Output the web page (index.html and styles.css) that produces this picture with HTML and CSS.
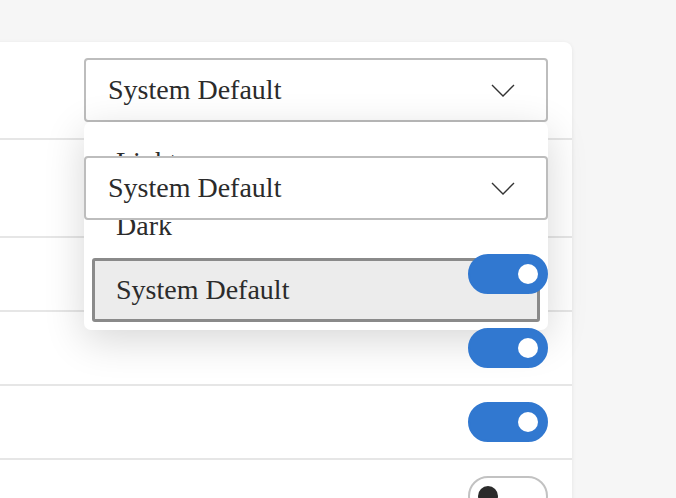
FILE: index.html
```html
<!DOCTYPE html>
<html lang="en">
<head>
<meta charset="utf-8">
<title>Settings</title>
<link rel="stylesheet" href="styles.css">
</head>
<body>
<main class="page">
  <section class="card">
    <div class="row">
      <div class="select-wrap">
        <button class="select" type="button">
          <span class="select-value">System Default</span>
          <svg class="chevron" width="24" height="13" viewBox="0 0 24 13" aria-hidden="true"><polyline points="1,1 12,12 23,1" fill="none" stroke="#333" stroke-width="1.4"/></svg>
        </button>
        <ul class="menu" role="listbox">
          <li class="option">Light</li>
          <li class="option">Dark</li>
          <li class="option selected">System Default</li>
        </ul>
      </div>
    </div>
    <div class="row">
      <button class="select raised" type="button">
        <span class="select-value">System Default</span>
        <svg class="chevron" width="24" height="13" viewBox="0 0 24 13" aria-hidden="true"><polyline points="1,1 12,12 23,1" fill="none" stroke="#333" stroke-width="1.4"/></svg>
      </button>
    </div>
    <div class="row">
      <span class="toggle on"><span class="knob"></span></span>
    </div>
    <div class="row">
      <span class="toggle on"><span class="knob"></span></span>
    </div>
    <div class="row">
      <span class="toggle on"><span class="knob"></span></span>
    </div>
    <div class="row">
      <span class="toggle"><span class="knob"></span></span>
    </div>
  </section>
</main>
</body>
</html>
```
FILE: styles.css
```css
html, body {
  margin: 0;
  height: 100%;
  overflow: hidden;
  background: #f6f6f6;
  font-family: "Liberation Serif", "Times New Roman", serif;
  color: #2b2b2b;
}

.page {
  padding-top: 42px;
}

.card {
  width: 700px;
  margin-left: -128px;
  background: #fff;
  border-radius: 8px;
  box-shadow: 0 1px 4px rgba(0, 0, 0, 0.08);
}

.row {
  display: flex;
  justify-content: flex-end;
  align-items: center;
  padding: 16px 24px;
  border-bottom: 2px solid #e6e6e6;
}

.select-wrap {
  position: relative;
}

.select {
  display: flex;
  align-items: center;
  justify-content: space-between;
  box-sizing: border-box;
  width: 464px;
  height: 64px;
  padding: 0 31px 0 22px;
  margin: 0;
  background: #fff;
  border: 2px solid #bdbdbd;
  border-radius: 4px;
  font-family: inherit;
  font-size: 28px;
  color: #2b2b2b;
  text-align: left;
}

.select.raised {
  position: relative;
  z-index: 2;
}

.chevron {
  display: block;
  flex: none;
}

.menu {
  position: absolute;
  top: 100%;
  left: 0;
  right: 0;
  z-index: 1;
  margin: 0;
  padding: 8px;
  list-style: none;
  background: #fff;
  border-radius: 7px;
  box-shadow: 0 10px 40px rgba(0, 0, 0, 0.16);
}

.option {
  box-sizing: border-box;
  height: 64px;
  display: flex;
  align-items: center;
  padding: 0 24px;
  font-size: 28px;
}

.option.selected {
  padding-left: 21px;
  background: #ececec;
  border: 3px solid #8a8a8a;
  border-radius: 3px;
}

.toggle {
  position: relative;
  z-index: 2;
  box-sizing: border-box;
  display: flex;
  align-items: center;
  width: 80px;
  height: 40px;
  padding: 0 8px;
  border: 2px solid #c2c2c2;
  border-radius: 20px;
  background: #fff;
}

.toggle .knob {
  width: 20px;
  height: 20px;
  border-radius: 50%;
  background: #2b2b2b;
}

.toggle.on {
  justify-content: flex-end;
  border-color: #3178d0;
  background: #3178d0;
}

.toggle.on .knob {
  background: #fff;
}
```
